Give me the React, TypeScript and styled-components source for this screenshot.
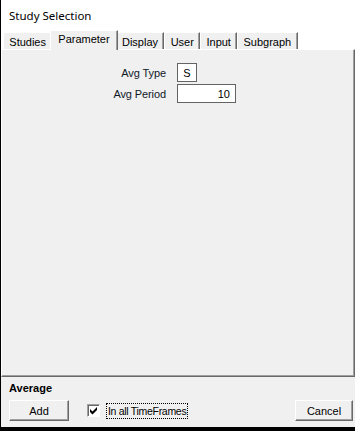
import React from "react";
import styled, { createGlobalStyle } from "styled-components";

const Global = createGlobalStyle`
  html, body { margin: 0; padding: 0; background: #000; }
  body { font-family: "Liberation Sans", Arial, sans-serif; }
`;

const Window = styled.div`
  width: 355px;
  height: 431px;
  box-sizing: border-box;
  border-left: 1px solid #000;
  border-bottom: 4px solid #000;
  background: #f0f0f0;
  display: flex;
  flex-direction: column;
  overflow: hidden;
`;

const Header = styled.div`
  background: #fff;
  display: flex;
  flex-direction: column;
`;

const Title = styled.div`
  height: 30px;
  display: flex;
  align-items: center;
  padding-left: 8px;
  font-family: "Noto Sans", "Open Sans", sans-serif;
  font-size: 11.5px;
  color: #000;
`;

const TabStrip = styled.div`
  display: flex;
  align-items: flex-end;
  height: 19px;
  padding-left: 2px;
`;

const Tab = styled.div<{ $active?: boolean }>`
  box-sizing: border-box;
  height: ${(p) => (p.$active ? "20px" : "17px")};
  margin: ${(p) => (p.$active ? "0 -2px -1px -2px" : "0")};
  position: ${(p) => (p.$active ? "relative" : "static")};
  z-index: ${(p) => (p.$active ? 1 : 0)};
  padding: ${(p) => (p.$active ? "2px 7px 0 7px" : "1px 5.3px 0 5.3px")};
  background: #f0f0f0;
  border-top: 1px solid #fff;
  border-left: 1px solid #fff;
  border-right: 1px solid #696969;
  box-shadow: inset -1px 0 0 #a0a0a0;
  font-size: 11px;
  color: #000;
  display: flex;
  align-items: ${(p) => (p.$active ? "flex-start" : "center")};
  white-space: nowrap;
`;

const Panel = styled.div`
  height: 328px;
  box-sizing: border-box;
  border-top: 1px solid #fff;
  border-left: 1px solid #fff;
  border-right: 1px solid #696969;
  border-bottom: 1px solid #696969;
  box-shadow: inset -1px -1px 0 #a0a0a0;
  padding-top: 13px;
`;

const FieldGrid = styled.div`
  display: grid;
  grid-template-columns: 164px auto;
  column-gap: 11px;
  row-gap: 2px;
  align-items: center;
  justify-content: start;
`;

const Label = styled.div`
  justify-self: end;
  font-size: 11px;
  letter-spacing: -0.1px;
  color: #101828;
`;

const ValueBox = styled.div<{ $w: number; $align?: string }>`
  width: ${(p) => p.$w}px;
  height: 19px;
  box-sizing: border-box;
  border: 1px solid #646464;
  background: #fff;
  font-size: 11px;
  color: #000;
  display: flex;
  align-items: center;
  justify-content: ${(p) => p.$align || "center"};
  padding: 0 5px;
`;

const Footer = styled.div`
  flex: 1;
  display: flex;
  flex-direction: column;
  padding: 5px 2px 0 8px;
`;

const FooterTitle = styled.div`
  font-size: 11px;
  font-weight: bold;
  color: #000;
  height: 18px;
`;

const FooterRow = styled.div`
  display: flex;
  align-items: center;
`;

const Button = styled.div<{ $w: number }>`
  width: ${(p) => p.$w}px;
  height: 21px;
  box-sizing: border-box;
  background: #f0f0f0;
  border-top: 1px solid #fff;
  border-left: 1px solid #fff;
  border-right: 1px solid #696969;
  border-bottom: 1px solid #696969;
  box-shadow: inset -1px -1px 0 #a0a0a0;
  font-size: 11px;
  color: #000;
  display: flex;
  align-items: center;
  justify-content: center;
`;

const CheckWrap = styled.div`
  display: flex;
  align-items: center;
  margin-left: 18px;
`;

const CheckBox = styled.div`
  width: 13px;
  height: 13px;
  box-sizing: border-box;
  border-top: 1px solid #a0a0a0;
  border-left: 1px solid #a0a0a0;
  border-right: 1px solid #fff;
  border-bottom: 1px solid #fff;
  box-shadow: inset 1px 1px 0 #696969;
  background: #fff;
  display: flex;
  align-items: center;
  justify-content: center;
`;

const CheckLabel = styled.div`
  margin-left: 6px;
  padding: 1px 1px;
  border: 1px dotted #000;
  font-size: 10.5px;
  letter-spacing: -0.3px;
  color: #000;
`;

const Spacer = styled.div`
  flex: 1;
`;

export default function App() {
  return (
    <>
      <Global />
      <Window>
        <Header>
          <Title>Study Selection</Title>
          <TabStrip>
            <Tab>Studies</Tab>
            <Tab $active>Parameter</Tab>
            <Tab>Display</Tab>
            <Tab>User</Tab>
            <Tab>Input</Tab>
            <Tab>Subgraph</Tab>
          </TabStrip>
        </Header>
        <Panel>
          <FieldGrid>
            <Label>Avg Type</Label>
            <ValueBox $w={20}>S</ValueBox>
            <Label>Avg Period</Label>
            <ValueBox $w={59} $align="flex-end">10</ValueBox>
          </FieldGrid>
        </Panel>
        <Footer>
          <FooterTitle>Average</FooterTitle>
          <FooterRow>
            <Button $w={60}>Add</Button>
            <CheckWrap>
              <CheckBox>
                <svg width="9" height="9" viewBox="0 0 9 9">
                  <path d="M1 3 L3.5 5.5 L8 1 L8 4 L3.5 8.5 L1 6 Z" fill="#000" />
                </svg>
              </CheckBox>
              <CheckLabel>In all TimeFrames</CheckLabel>
            </CheckWrap>
            <Spacer />
            <Button $w={58}>Cancel</Button>
          </FooterRow>
        </Footer>
      </Window>
    </>
  );
}
